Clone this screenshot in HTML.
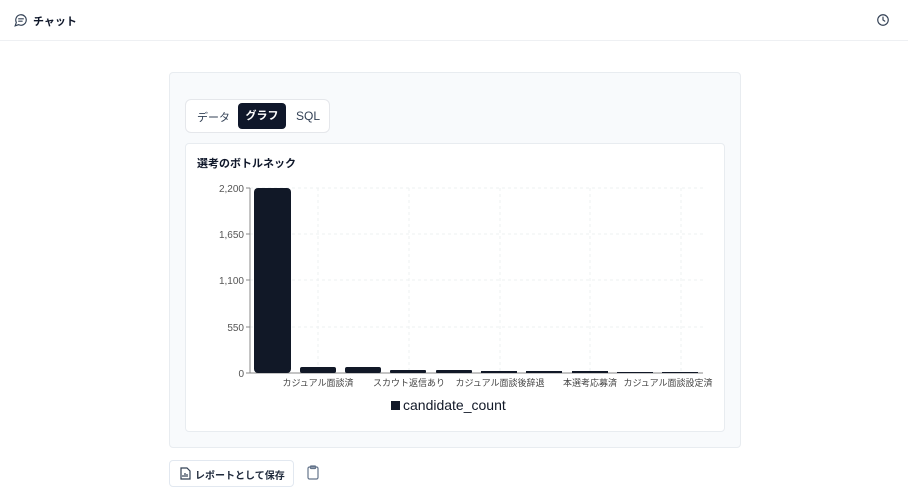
<!DOCTYPE html>
<html><head><meta charset="utf-8"><style>
*{box-sizing:border-box;margin:0;padding:0}
body{width:908px;height:500px;background:#fff;font-family:"Liberation Sans","Noto Sans CJK JP",sans-serif;color:#0f172a;position:relative;overflow:hidden}
.hdr{position:absolute;left:0;top:0;width:908px;height:41px;border-bottom:1px solid #eef0f3}
.abs{position:absolute}
</style></head><body>
<div class="hdr">
<svg class="abs" style="left:14px;top:13px" width="14" height="14" viewBox="0 0 24 24" fill="none" stroke="#334155" stroke-width="2" stroke-linecap="round"><path d="M7.9 20A9 9 0 1 0 4 16.1L2 22z"/><path d="M8 10h8M8 14h6"/></svg>
<div class="abs" style="left:33px;top:13px;font-size:11px;font-weight:bold">チャット</div>
<svg class="abs" style="left:876px;top:13px" width="14" height="14" viewBox="0 0 24 24" fill="none" stroke="#334155" stroke-width="2" stroke-linecap="round"><circle cx="12" cy="12" r="9"/><path d="M12 7v5l3 2"/></svg>
</div>
<div class="abs" style="left:169px;top:72px;width:572px;height:376px;background:#f8fafc;border:1px solid #e8ecf0;border-radius:4px"></div>
<div class="abs" style="left:185px;top:99px;width:145px;height:34px;background:#fff;border:1px solid #e5e7eb;border-radius:6px"></div>
<div class="abs" style="left:197px;top:109px;font-size:11px;color:#334155">データ</div>
<div class="abs" style="left:238px;top:103px;width:48px;height:26px;background:#0f172a;border-radius:4px;color:#fff;font-size:11px;font-weight:bold;text-align:center;line-height:26px">グラフ</div>
<div class="abs" style="left:296px;top:109px;font-size:12px;color:#334155">SQL</div>
<div class="abs" style="left:185px;top:143px;width:540px;height:289px;background:#fff;border:1px solid #e8ecf0;border-radius:4px"></div>
<div class="abs" style="left:197px;top:155px;font-size:11px;font-weight:bold">選考のボトルネック</div>
<svg class="abs" style="left:0;top:0" width="908" height="500" font-family="Liberation Sans, Noto Sans CJK JP, sans-serif">
<g stroke="#eef0f2" stroke-dasharray="3 3">
<line x1="250" y1="188" x2="703" y2="188"/><line x1="250" y1="234" x2="703" y2="234"/><line x1="250" y1="280" x2="703" y2="280"/><line x1="250" y1="327" x2="703" y2="327"/>
<line x1="318" y1="188" x2="318" y2="373"/><line x1="409" y1="188" x2="409" y2="373"/><line x1="500" y1="188" x2="500" y2="373"/><line x1="590" y1="188" x2="590" y2="373"/><line x1="681" y1="188" x2="681" y2="373"/>
</g>
<g stroke="#888"><line x1="250" y1="188" x2="250" y2="373"/><line x1="250" y1="373" x2="703" y2="373"/>
<line x1="246" y1="188" x2="250" y2="188"/><line x1="246" y1="234" x2="250" y2="234"/><line x1="246" y1="280" x2="250" y2="280"/><line x1="246" y1="327" x2="250" y2="327"/><line x1="246" y1="373" x2="250" y2="373"/></g>
<g font-size="10" fill="#555" text-anchor="end"><text x="244" y="192">2,200</text><text x="244" y="238">1,650</text><text x="244" y="284">1,100</text><text x="244" y="331">550</text><text x="244" y="377">0</text></g>
<g fill="#111827">
<rect x="254" y="188" width="37" height="185" rx="4"/>
<rect x="300" y="367" width="36" height="6" rx="2"/><rect x="345" y="367" width="36" height="6" rx="2"/>
<rect x="390" y="370" width="36" height="3" rx="1"/><rect x="436" y="370" width="36" height="3" rx="1"/>
<rect x="481" y="371" width="36" height="2"/><rect x="526" y="371" width="36" height="2"/><rect x="572" y="371" width="36" height="2"/>
<rect x="617" y="372" width="36" height="1"/><rect x="662" y="372" width="36" height="1"/>
</g>
<g font-size="9" fill="#444" text-anchor="middle"><text x="318" y="386">カジュアル面談済</text><text x="409" y="386">スカウト返信あり</text><text x="500" y="386">カジュアル面談後辞退</text><text x="590" y="386">本選考応募済</text><text x="668" y="386">カジュアル面談設定済</text></g>
<rect x="391" y="401" width="9" height="9" fill="#111827"/>
<text x="403" y="410" font-size="14" fill="#111827">candidate_count</text>
</svg>
<div class="abs" style="left:169px;top:460px;width:125px;height:27px;border:1px solid #e2e8f0;border-radius:4px;background:#fff"></div>
<svg class="abs" style="left:180px;top:467px" width="11" height="13" viewBox="0 0 11 13" fill="none" stroke="#334155" stroke-width="1.2"><path d="M1 1h6l3 3v8H1z"/><path d="M3 10V8M5 10V6M7 10V7"/></svg>
<div class="abs" style="left:195px;top:467px;font-size:10px;font-weight:bold;color:#1e293b">レポートとして保存</div>
<svg class="abs" style="left:307px;top:465px" width="12" height="15" viewBox="0 0 12 15" fill="none" stroke="#64748b" stroke-width="1.2"><rect x="1" y="2" width="10" height="12" rx="1.5"/><rect x="3.5" y="1" width="5" height="2.5" rx="0.5"/></svg>
</body></html>
